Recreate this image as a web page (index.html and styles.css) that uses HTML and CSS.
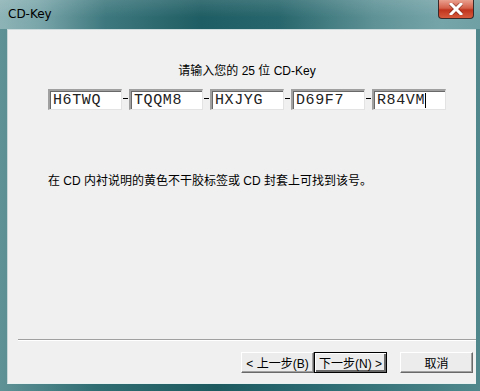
FILE: index.html
```html
<!DOCTYPE html>
<html>
  <head>
    <meta charset="UTF-8">
    <title>CD-Key</title>
    <link rel="stylesheet" href="styles.css">
  </head>
  <body>
    <div class="window">
      <div class="titlebar">
        <span class="title">CD-Key</span>
        <div class="closeButton">
          <svg width="14" height="12" viewBox="0 0 14 12">
            <path d="M2 1 L12 11 M12 1 L2 11" stroke="#5a1a10" stroke-width="4.5" stroke-linecap="square" opacity="0.5"/>
            <path d="M2 1 L12 11 M12 1 L2 11" stroke="#fff" stroke-width="3" stroke-linecap="square"/>
          </svg>
        </div>
      </div>
      <div class="client">
        <div class="keyBlock">
          <div class="prompt">请输入您的 25 位 CD-Key</div>
          <div class="keyRow">
            <input class="keyInput" type="text" value="H6TWQ">
            <span class="dash"></span>
            <input class="keyInput" type="text" value="TQQM8">
            <span class="dash"></span>
            <input class="keyInput" type="text" value="HXJYG">
            <span class="dash"></span>
            <input class="keyInput" type="text" value="D69F7">
            <span class="dash"></span>
            <input class="keyInput cursor" type="text" value="R84VM">
          </div>
        </div>
        <div class="hint">在 CD 内衬说明的黄色不干胶标签或 CD 封套上可找到该号。</div>
        <div class="spacer"></div>
        <div class="separator"></div>
        <div class="buttons">
          <button class="button">&lt; 上一步(<u>B</u>)</button>
          <button class="button defaultButton">下一步(<u>N</u>) &gt;</button>
          <button class="button cancelButton">取消</button>
        </div>
      </div>
    </div>
  </body>
</html>
```

FILE: styles.css
```css
* {
  font-family: "Liberation Sans", "Noto Sans CJK SC", sans-serif;
  box-sizing: border-box;
}

body {
  margin: 0;
  width: 480px;
  height: 391px;
  overflow: hidden;
}

.window {
  width: 480px;
  height: 391px;
  display: flex;
  flex-direction: column;
  padding: 0 4px 7px 7px;
  background: linear-gradient(90deg, #5f9296 0%, #2f6d73 20%, #1c5a60 45%, #2a6a70 65%, #4f878c 100%);
}

.titlebar {
  height: 29px;
  display: flex;
  align-items: flex-start;
  margin: 0 -4px 0 -7px;
  background:
    linear-gradient(180deg, rgba(255,255,255,0.12) 0%, rgba(255,255,255,0) 60%),
    linear-gradient(90deg, #8db3b6 0%, #7aa6aa 8%, #3d787e 22%, #1e5d63 42%, #27666c 58%, #5e9296 78%, #76a5a9 92%, #6fa0a4 100%);
}

.title {
  color: #000;
  font-family: "DejaVu Sans", sans-serif;
  font-size: 12px;
  padding: 7px 0 0 8px;
}

.closeButton {
  margin-left: auto;
  margin-right: 6px;
  width: 36px;
  height: 19px;
  border: 1px solid #3a2a2a;
  border-top: none;
  border-radius: 0 0 4px 4px;
  background: linear-gradient(180deg, #e9a08f 0%, #d4604a 45%, #c0341d 55%, #d65a3c 100%);
  display: flex;
  align-items: center;
  justify-content: center;
}

.client {
  flex: 1;
  display: flex;
  flex-direction: column;
  background-color: #f0f0f0;
  border-top: 1px solid #cfdcdd;
  border-left: 1px solid #c8d6d7;
  border-bottom: 1px solid #e9f0f0;
}

.keyBlock {
  width: 398px;
  margin: 33px 0 0 40px;
}

.prompt {
  font-size: 12px;
  line-height: 16px;
  text-align: center;
  color: #000;
}

.keyRow {
  display: flex;
  align-items: center;
  margin-top: 10px;
}

.keyInput {
  width: 74px;
  height: 21px;
  padding: 1px 0 0 3px;
  margin: 0;
  font-family: "Liberation Mono", monospace;
  font-size: 15px;
  letter-spacing: 0.6px;
  color: #222;
  background: #fff;
  border-top: 2px solid #a0a0a0;
  border-left: 2px solid #a0a0a0;
  border-right: 1px solid #e3e3e3;
  border-bottom: 1px solid #e3e3e3;
  box-shadow: inset 1px 1px 0 #696969;
  outline: none;
}

.cursor {
  background: linear-gradient(90deg, #fff 51px, #000 51px, #000 52px, #fff 52px) no-repeat center / 100% 15px, #fff;
}

.dash {
  width: 5px;
  height: 1px;
  margin: 0 1px 2px 1px;
  background: #000;
}

.hint {
  margin: 63px 0 0 40px;
  font-size: 12px;
  line-height: 16px;
  color: #000;
}

.spacer {
  flex: 1;
}

.separator {
  margin-left: 10px;
  height: 2px;
  border-top: 1px solid #a0a0a0;
  border-bottom: 1px solid #fff;
}

.buttons {
  display: flex;
  padding: 11px 3px 10px 0;
  justify-content: flex-end;
}

.button {
  height: 21px;
  padding: 0;
  font-size: 12px;
  color: #000;
  background: #ececec;
  border-top: 1px solid #fff;
  border-left: 1px solid #fff;
  border-right: 1px solid #696969;
  border-bottom: 1px solid #696969;
  box-shadow: inset -1px -1px 0 #a0a0a0;
  width: 73px;
}

.button u {
  text-decoration: none;
}

.defaultButton {
  border: 1px solid #000;
  box-shadow: inset 1px 1px 0 #fff, inset -2px -2px 0 #696969;
}

.cancelButton {
  margin-left: 13px;
}
```
